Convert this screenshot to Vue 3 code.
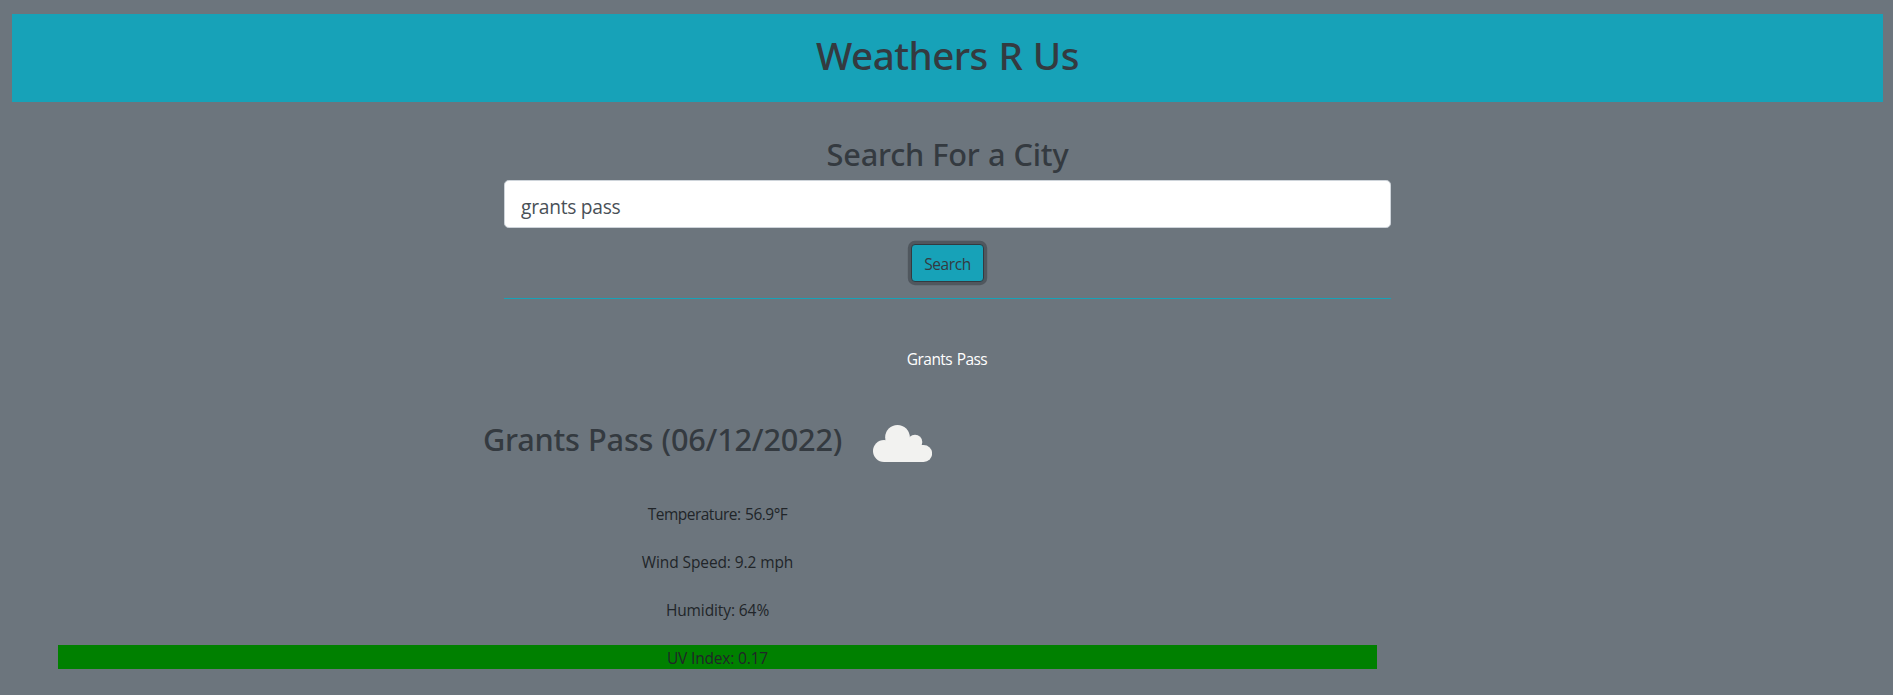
<script setup>
import { ref } from 'vue'

const city = ref('grants pass')
const details = [
  { text: 'Temperature: 56.9°F', name: 'temperature' },
  { text: 'Wind Speed: 9.2 mph', name: 'wind' },
  { text: 'Humidity: 64%', name: 'humidity' },
  { text: 'UV Index: 0.17', name: 'uv' }
]
</script>

<template>
  <div class="page">
    <header class="banner">
      <h1>Weathers R Us</h1>
    </header>

    <section class="search">
      <h2>Search For a City</h2>
      <input v-model="city" type="text" spellcheck="false" />
      <button type="button">Search</button>
    </section>

    <p class="history">Grants Pass</p>

    <section class="current">
      <div class="heading">
        <h2>Grants Pass (06/12/2022)</h2>
        <svg class="cloud" viewBox="0 0 178 111" aria-hidden="true">
          <circle cx="33" cy="78" r="33" />
          <circle cx="73.5" cy="37" r="37" />
          <circle cx="126" cy="51" r="22" />
          <circle cx="152" cy="85.5" r="25.5" />
          <path d="M33 60H152V111H33Z" />
          <path d="M70 45H126V75H70Z" />
        </svg>
      </div>
      <p v-for="item in details" :key="item.name" :class="['detail', item.name]">{{ item.text }}</p>
    </section>
  </div>
</template>

<style>
body {
  margin: 0;
  background: #6c757d;
}
</style>

<style scoped>
.page {
  box-sizing: border-box;
  height: 695px;
  padding-top: 14px;
  overflow: hidden;
  background: #6c757d;
  color: #212529;
  font: 400 15.5px/26px "Open Sans", "Noto Sans", sans-serif;
}
h1,
h2,
p {
  margin: 0;
}
h1,
h2 {
  font-family: "Noto Sans", sans-serif;
  font-weight: 500;
  color: #343a40;
  white-space: nowrap;
}
.banner {
  box-sizing: border-box;
  height: 88px;
  margin: 0 10px 0 12px;
  padding-top: 17px;
  background: #17a2b8;
  text-align: center;
}
h1 {
  font-size: 38.6px;
  line-height: 48px;
  letter-spacing: -0.5px;
  word-spacing: 1px;
}
h2 {
  font-size: 30.7px;
  line-height: 38px;
  letter-spacing: -0.21px;
  word-spacing: 0.5px;
}
.search {
  box-sizing: border-box;
  display: flex;
  flex-direction: column;
  align-items: center;
  width: 887px;
  height: 197px;
  margin: 0 0 0 504px;
  padding-top: 33px;
  border-bottom: 1px solid #17a2b8;
}
input {
  box-sizing: border-box;
  width: 100%;
  height: 48px;
  margin: 7px 0 16px;
  padding: 10px 16px 6px;
  border: 1px solid #ced4da;
  border-radius: 4.8px;
  background: #fff;
  color: #495057;
  font: 400 19.2px/30px "Open Sans", "Noto Sans", sans-serif;
  letter-spacing: -0.26px;
  outline: none;
}
button {
  box-sizing: border-box;
  width: 73px;
  height: 38px;
  padding: 2px 0 0;
  border: 1px solid #343a40;
  border-radius: 4px;
  background: #17a2b8;
  box-shadow: 0 0 0 3.2px rgba(52, 58, 64, 0.5);
  color: #343a40;
  font: inherit;
  letter-spacing: -0.4px;
}
.history {
  height: 24px;
  margin-top: 47px;
  padding-left: 1px;
  color: #fff;
  text-align: center;
  letter-spacing: -0.55px;
  word-spacing: 1px;
}
.current {
  width: 1319px;
  margin: 50px 0 0 58px;
}
.heading {
  display: flex;
  align-items: flex-start;
  height: 81px;
  padding-left: 425px;
}
.heading h2 {
  width: 390px;
  letter-spacing: -0.22px;
}
.cloud {
  width: 59.3px;
  height: 37px;
  margin-top: 5px;
  fill: #f2f2f0;
}
.detail {
  height: 24px;
  margin-bottom: 24px;
  text-align: center;
}
.temperature {
  letter-spacing: -0.5px;
  word-spacing: 1px;
}
.wind {
  letter-spacing: -0.1px;
}
.humidity {
  letter-spacing: -0.1px;
}
.uv {
  margin-bottom: 0;
  background: #008000;
  letter-spacing: -0.17px;
}
</style>
